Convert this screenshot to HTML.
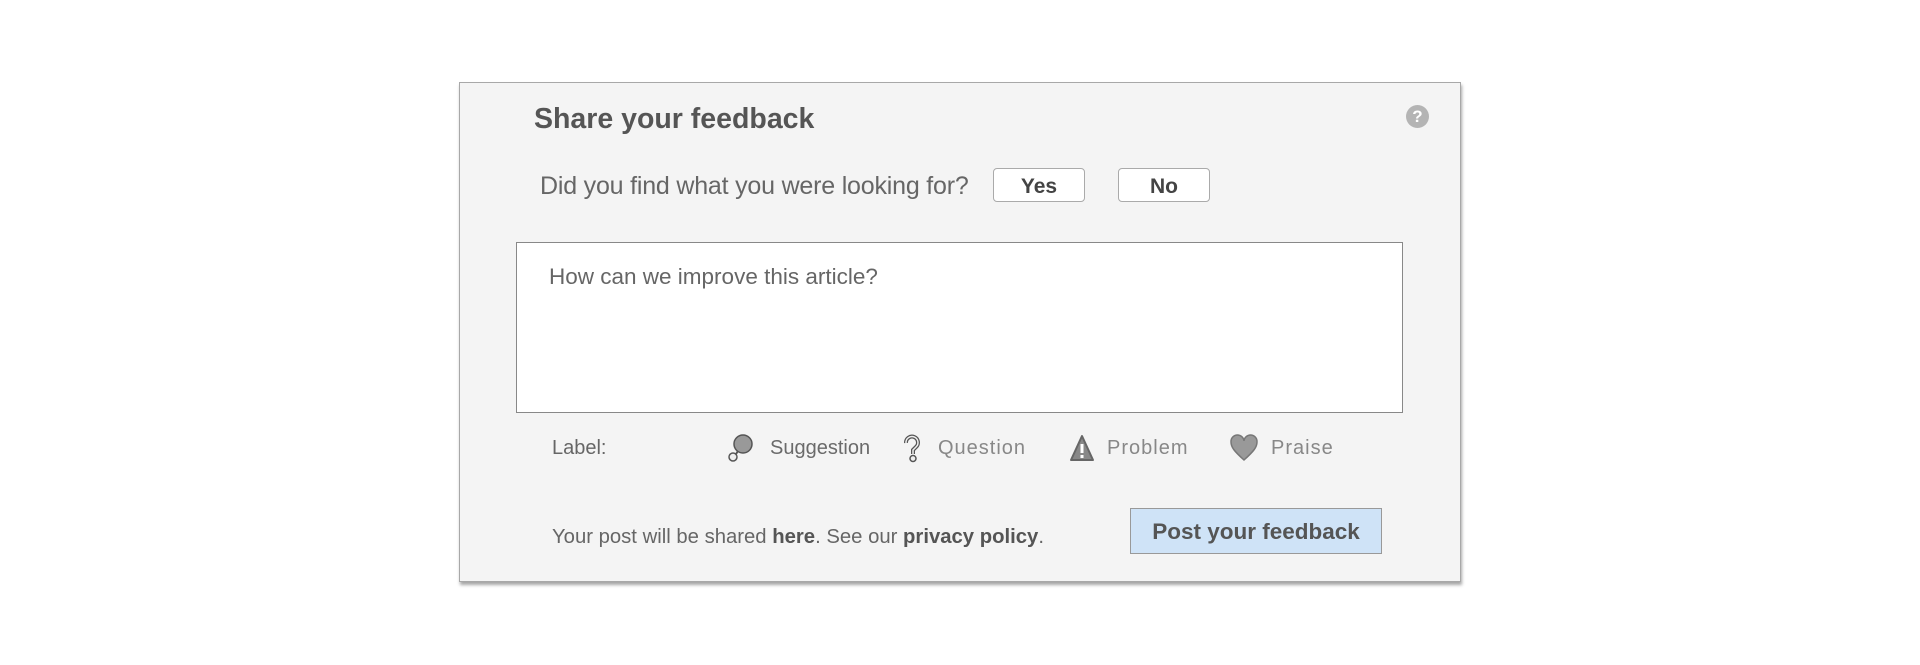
<!DOCTYPE html>
<html><head><meta charset="utf-8"><style>
html,body{margin:0;padding:0;background:#fff;width:1920px;height:665px;overflow:hidden;font-family:"Liberation Sans",Arial,sans-serif;}
.box{position:absolute;left:459px;top:82px;width:1000px;height:498px;background:#f4f4f4;border:1px solid #a8a8a8;box-shadow:1px 3px 3px rgba(0,0,0,.35);}
.abs{position:absolute;white-space:nowrap;}
.title{left:74px;top:20px;font-size:28.5px;font-weight:bold;color:#555;letter-spacing:0px;}
.help{left:946px;top:22px;width:23px;height:23px;border-radius:50%;background:#b4b4b4;color:#fff;font-weight:bold;font-size:17px;text-align:center;line-height:23px;}
.q{left:80px;top:89px;font-size:25px;color:#666;letter-spacing:-0.2px;}
.btn{position:absolute;top:85px;width:90px;height:32px;background:#fff;border:1px solid #aaa;border-radius:4px;font-weight:bold;font-size:21px;color:#444;text-align:center;line-height:35px;}
.ta{left:56px;top:159px;width:885px;height:169px;background:#fff;border:1px solid #888;}
.ph{left:32px;top:21px;font-size:22.5px;color:#666;}
.lab{top:354px;font-size:20px;color:#777;}
.ic{position:absolute;top:350px;}
.foot{left:92px;top:443px;font-size:20.3px;color:#666;letter-spacing:0px;}
.foot b{color:#555;}
.post{left:670px;top:425px;width:250px;height:44px;background:#cfe3f7;border:1px solid #999;font-weight:bold;font-size:22.5px;color:#555;text-align:center;line-height:46px;}
</style></head><body>
<div class="box">
<div class="abs title">Share your feedback</div>
<div class="abs help">?</div>
<div class="abs q">Did you find what you were looking for?</div>
<div class="btn" style="left:533px">Yes</div>
<div class="btn" style="left:658px">No</div>
<div class="abs ta"><div class="abs ph">How can we improve this article?</div></div>
<div class="abs lab" style="left:92px;color:#666">Label:</div>
<svg class="ic" style="left:267px" width="28" height="30" viewBox="0 0 28 30"><circle cx="16" cy="11" r="9" fill="#999" stroke="#555" stroke-width="1.5"/><circle cx="6" cy="24" r="4" fill="#eee" stroke="#555" stroke-width="1.5"/><line x1="9" y1="21" x2="11" y2="18" stroke="#555" stroke-width="2"/></svg>
<div class="abs lab" style="left:310px;color:#6a6a6a">Suggestion</div>
<svg class="ic" style="left:441px" width="22" height="30" viewBox="0 0 22 30"><path d="M5 10a6 6 0 1 1 10 4l-3 3v4" fill="none" stroke="#555" stroke-width="4"/><path d="M5 10a6 6 0 1 1 10 4l-3 3v4" fill="none" stroke="#eee" stroke-width="1.5"/><circle cx="12" cy="25.5" r="3" fill="#eee" stroke="#555" stroke-width="1.5"/></svg>
<div class="abs lab" style="left:478px;color:#888;letter-spacing:1px">Question</div>
<svg class="ic" style="left:608px" width="28" height="30" viewBox="0 0 28 30"><path d="M14 3L25 27H3Z" fill="#888" stroke="#666" stroke-width="2" stroke-linejoin="round"/><rect x="12.5" y="11" width="3" height="9" fill="#fff"/><rect x="12.5" y="22" width="3" height="3" fill="#fff"/></svg>
<div class="abs lab" style="left:647px;color:#888;letter-spacing:1px">Problem</div>
<svg class="ic" style="left:769px" width="30" height="30" viewBox="0 0 30 30"><path d="M15 27C5 18 2 14 2 9a6.5 6.5 0 0 1 13-1a6.5 6.5 0 0 1 13 1c0 5-3 9-13 18z" fill="#999" stroke="#777" stroke-width="1.5"/></svg>
<div class="abs lab" style="left:811px;color:#888;letter-spacing:1px">Praise</div>
<div class="abs foot">Your post will be shared <b>here</b>. See our <b>privacy policy</b>.</div>
<div class="abs post">Post your feedback</div>
</div>
</body></html>
